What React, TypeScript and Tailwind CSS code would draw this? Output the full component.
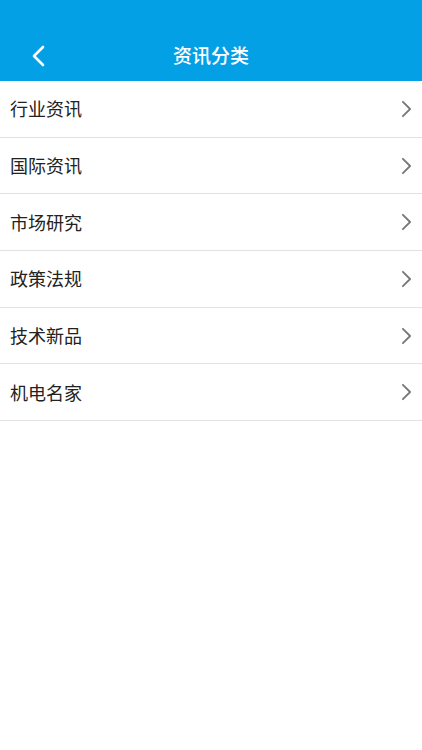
import React from 'react';

const items = ['行业资讯', '国际资讯', '市场研究', '政策法规', '技术新品', '机电名家'];

function Chevron({ className }: { className?: string }) {
  return (
    <svg viewBox="0 0 12 20" className={className} fill="none" stroke="currentColor" strokeLinecap="round" strokeLinejoin="round">
      <path d="M2 2l8 8-8 8" />
    </svg>
  );
}

export default function App() {
  return (
    <div
      className="min-h-screen bg-white"
      style={{ fontFamily: '"Noto Sans CJK SC", "Noto Sans", sans-serif' }}
    >
      {/* header */}
      <div className="relative h-[81px] bg-[#04a0e6]">
        <div className="flex h-full items-end justify-center pb-[13px]">
          <span className="text-[19px] leading-[26px] font-medium text-white">资讯分类</span>
        </div>
        <button className="absolute left-[31px] top-[45px] text-white">
          <svg viewBox="0 0 14 22" className="h-[22px] w-[14px]" fill="none" stroke="currentColor" strokeWidth="2.6" strokeLinecap="round" strokeLinejoin="round">
            <path d="M12 2L3 11l9 9" />
          </svg>
        </button>
      </div>

      {/* list */}
      <ul>
        {items.map((item) => (
          <li
            key={item}
            className="flex h-[56.7px] items-center justify-between border-b border-[#e2e2e2] pl-[10px] pr-[10px]"
          >
            <span className="text-[18px] text-[#222]">{item}</span>
            <Chevron className="h-[18px] w-[11px] stroke-[2] text-[#777]" />
          </li>
        ))}
      </ul>
    </div>
  );
}
